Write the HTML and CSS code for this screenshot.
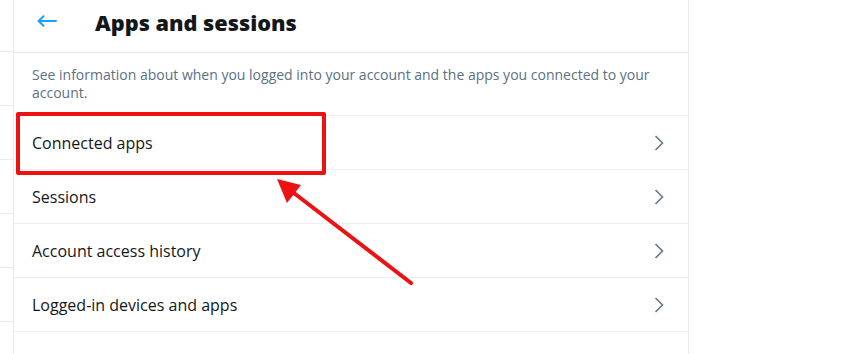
FILE: index.html
```html
<!DOCTYPE html>
<html>
<head>
<meta charset="utf-8">
<link rel="stylesheet" href="styles.css">
</head>
<body>
<div class="page">
  <div class="side">
    <div class="side-row first"></div>
    <div class="side-row"></div>
    <div class="side-row"></div>
    <div class="side-row"></div>
    <div class="side-row"></div>
    <div class="side-row"></div>
  </div>
  <main class="main">
    <header class="header">
      <span class="back">
        <svg viewBox="0 0 20 12" width="20" height="12"><path d="M1.5 6H19M6.5 1.2L1.5 6l5 4.8" fill="none" stroke="#1da1f2" stroke-width="2" stroke-linecap="round" stroke-linejoin="round"/></svg>
      </span>
      <h1 class="title">Apps and sessions</h1>
    </header>
    <p class="desc">See information about when you logged into your account and the apps you connected to your account.</p>
    <ul class="list">
      <li class="item"><span>Connected apps</span><svg class="chev" viewBox="0 0 10 16" width="10" height="16"><path d="M1.5 1l7 7-7 7" fill="none" stroke="#657786" stroke-width="1.6"/></svg></li>
      <li class="item"><span>Sessions</span><svg class="chev" viewBox="0 0 10 16" width="10" height="16"><path d="M1.5 1l7 7-7 7" fill="none" stroke="#657786" stroke-width="1.6"/></svg></li>
      <li class="item"><span>Account access history</span><svg class="chev" viewBox="0 0 10 16" width="10" height="16"><path d="M1.5 1l7 7-7 7" fill="none" stroke="#657786" stroke-width="1.6"/></svg></li>
      <li class="item"><span>Logged-in devices and apps</span><svg class="chev" viewBox="0 0 10 16" width="10" height="16"><path d="M1.5 1l7 7-7 7" fill="none" stroke="#657786" stroke-width="1.6"/></svg></li>
    </ul>
  </main>
</div>
<div class="highlight"></div>
<svg class="pointer" width="864" height="354" viewBox="0 0 864 354">
  <line x1="411" y1="283" x2="290" y2="190" stroke="#ee1111" stroke-width="4" stroke-linecap="round"/>
  <polygon points="277,179 301,185 287,203" fill="#ee1111"/>
</svg>
</body>
</html>
```
FILE: styles.css
```css
* { box-sizing: border-box; }
html, body { margin: 0; padding: 0; background: #fff; }
body {
  font-family: "Open Sans", "Noto Sans", "Liberation Sans", sans-serif;
  color: #14171a;
  width: 864px;
  height: 354px;
  overflow: hidden;
  position: relative;
}
.page { display: flex; height: 354px; }
.side { width: 14px; border-right: 1px solid #e6ecf0; flex: none; }
.side-row { height: 54px; border-bottom: 1px solid #e6ecf0; }
.side-row.first { height: 52px; }
.main { width: 675px; border-right: 1px solid #e6ecf0; flex: none; }
.header {
  height: 53px;
  border-bottom: 1px solid #e1e8ed;
  display: flex;
  align-items: center;
  padding-left: 23px;
}
.back { display: flex; width: 20px; height: 12px; margin-top: -11px; }
.title {
  margin: -8px 0 0 38px;
  font-size: 21.7px;
  font-weight: 800;
}
.desc {
  margin: 0;
  padding: 13px 18px 13px 18px;
  font-size: 14px;
  line-height: 18px;
  color: #5b7083;
  border-bottom: 1px solid #ebeef0;
}
.list { list-style: none; margin: 0; padding: 0; }
.item {
  height: 54px;
  border-bottom: 1px solid #ebeef0;
  display: flex;
  align-items: center;
  justify-content: space-between;
  padding: 0 24px 0 18px;
  font-size: 16px;
}
.highlight {
  position: absolute;
  left: 16px;
  top: 112px;
  width: 310px;
  height: 63px;
  border: 4px solid #ee1111;
  border-radius: 2px;
}
.pointer { position: absolute; left: 0; top: 0; pointer-events: none; }
```
